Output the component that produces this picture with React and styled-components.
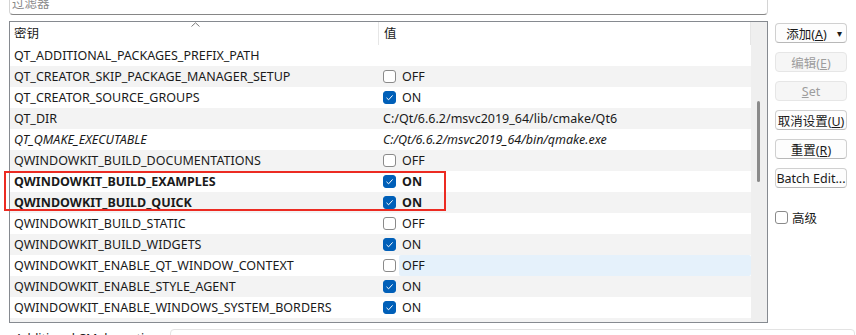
import React from 'react'
import styled, {createGlobalStyle} from 'styled-components'

const rows = [
  {key: 'QT_ADDITIONAL_PACKAGES_PREFIX_PATH', value: ''},
  {key: 'QT_CREATOR_SKIP_PACKAGE_MANAGER_SETUP', check: false},
  {key: 'QT_CREATOR_SOURCE_GROUPS', check: true},
  {key: 'QT_DIR', value: 'C:/Qt/6.6.2/msvc2019_64/lib/cmake/Qt6'},
  {key: 'QT_QMAKE_EXECUTABLE', value: 'C:/Qt/6.6.2/msvc2019_64/bin/qmake.exe', italic: true},
  {key: 'QWINDOWKIT_BUILD_DOCUMENTATIONS', check: false},
  {key: 'QWINDOWKIT_BUILD_EXAMPLES', check: true, bold: true},
  {key: 'QWINDOWKIT_BUILD_QUICK', check: true, bold: true},
  {key: 'QWINDOWKIT_BUILD_STATIC', check: false},
  {key: 'QWINDOWKIT_BUILD_WIDGETS', check: true},
  {key: 'QWINDOWKIT_ENABLE_QT_WINDOW_CONTEXT', check: false, hover: true},
  {key: 'QWINDOWKIT_ENABLE_STYLE_AGENT', check: true},
  {key: 'QWINDOWKIT_ENABLE_WINDOWS_SYSTEM_BORDERS', check: true},
  {key: 'QWINDOWKIT_INSTALL', value: ''},
]

function Check({on}) {
  return (
    <CheckBox $on={on}>
      {on && (
        <svg width="9" height="9" viewBox="0 0 9 9">
          <path d="M1.5 4.8 L3.6 6.8 L7.6 2.4" fill="none" stroke="#fff" strokeWidth="1" />
        </svg>
      )}
    </CheckBox>
  )
}

function App() {
  return (
    <Page>
      <GlobalStyle />
      <Filter placeholder="过滤器" />
      <Main>
        <TreeFrame>
          <TreeBody>
            <Header>
              <HeadCell $first>
                密钥
                <SortArrow width="9" height="5" viewBox="0 0 9 5">
                  <path d="M0.5 4.5 L4.5 0.8 L8.5 4.5" fill="none" stroke="#7a7a7a" strokeWidth="1" />
                </SortArrow>
              </HeadCell>
              <HeadCell>值</HeadCell>
            </Header>
            <Rows>
              {rows.map((r, i) => (
                <Row key={r.key} $alt={i % 2 === 1} $bold={r.bold} $italic={r.italic}>
                  <KeyCell>{r.key}</KeyCell>
                  <ValueCell>
                    {r.check !== undefined && <Check on={r.check} />}
                    <ValueText $boxed={r.check !== undefined} $hover={r.hover}>
                      {r.check !== undefined ? (r.check ? 'ON' : 'OFF') : r.value}
                    </ValueText>
                  </ValueCell>
                </Row>
              ))}
            </Rows>
          </TreeBody>
          <ScrollTrack>
            <Thumb />
          </ScrollTrack>
          <Marker />
        </TreeFrame>
        <Side>
          <Button>
            <span>添加(<u>A</u>)</span>
            <DropArrow>▾</DropArrow>
          </Button>
          <Button disabled><span>编辑(<u>E</u>)</span></Button>
          <Button disabled><span><u>S</u>et</span></Button>
          <Button><span>取消设置(<u>U</u>)</span></Button>
          <Button><span>重置(<u>R</u>)</span></Button>
          <Button><span>Batch Edit...</span></Button>
          <Advanced>
            <CheckBox />
            高级
          </Advanced>
        </Side>
      </Main>
      <Options>
        <OptionsLabel>Additional CMake options:</OptionsLabel>
        <OptionsInput />
      </Options>
    </Page>
  )
}

const GlobalStyle = createGlobalStyle`
body {
  margin: 0;
  background: #ffffff;
  overflow: hidden;
  font-family: "Noto Sans", "Noto Sans CJK SC", sans-serif;
  font-size: 12.5px;
  color: #1a1a1a;
}
`

const Page = styled.div`
width: 856px;
height: 344px;
margin-top: -9px;
padding-left: 9px;
box-sizing: border-box;
overflow: hidden;
`

const Filter = styled.input`
display: block;
width: 759px;
height: 24px;
box-sizing: border-box;
border: 1px solid #d4d4d4;
border-bottom: 1px solid #868686;
border-radius: 4px;
padding: 0 0 0 2px;
font-family: "Noto Sans", "Noto Sans CJK SC", sans-serif;
font-size: 12.5px;
outline: none;
&::placeholder {
  color: #8a8a8a;
}
`

const Main = styled.div`
display: flex;
margin-top: 6px;
`

const TreeFrame = styled.div`
position: relative;
display: flex;
width: 759px;
height: 302px;
box-sizing: border-box;
border: 1px solid #868a90;
`

const TreeBody = styled.div`
flex: 1;
display: flex;
flex-direction: column;
overflow: hidden;
`

const Header = styled.div`
display: grid;
grid-template-columns: 369px 1fr;
height: 23px;
flex: none;
border-right: 1px solid #e6e6e6;
`

const HeadCell = styled.div`
position: relative;
padding-left: ${p => (p.$first ? 4 : 5)}px;
line-height: 23px;
border-right: ${p => (p.$first ? '1px solid #e6e6e6' : 'none')};
`

const SortArrow = styled.svg`
position: absolute;
top: 0;
left: 181px;
`

const Rows = styled.div`
flex: 1;
overflow: hidden;
`

const Row = styled.div`
display: grid;
grid-template-columns: 369px 1fr;
height: 21px;
line-height: 21px;
background: ${p => (p.$alt ? '#f3f3f3' : '#ffffff')};
font-weight: ${p => (p.$bold ? 700 : 400)};
font-style: ${p => (p.$italic ? 'italic' : 'normal')};
white-space: nowrap;
`

const KeyCell = styled.div`
padding-left: 4px;
overflow: hidden;
`

const ValueCell = styled.div`
display: flex;
align-items: center;
padding-left: 4px;
`

const CheckBox = styled.span`
display: inline-flex;
align-items: center;
justify-content: center;
flex: none;
width: 13px;
height: 13px;
box-sizing: border-box;
border-radius: 3px;
border: 1px solid ${p => (p.$on ? '#005fb8' : '#8a8a8a')};
background: ${p => (p.$on ? '#005fb8' : '#ffffff')};
`

const ValueText = styled.div`
flex: 1;
align-self: stretch;
margin-left: ${p => (p.$boxed ? 3 : 0)}px;
padding-left: ${p => (p.$boxed ? 3 : 0)}px;
background: ${p => (p.$hover ? '#e5f1fb' : 'transparent')};
border-radius: 2px;
`

const ScrollTrack = styled.div`
position: relative;
width: 16px;
flex: none;
background: #efefef;
`

const Thumb = styled.div`
position: absolute;
left: 6px;
top: 79px;
width: 3px;
height: 81px;
border-radius: 2px;
background: #8a8a8a;
`

const Marker = styled.div`
position: absolute;
left: -6px;
top: 149px;
width: 442px;
height: 40px;
box-sizing: border-box;
border: 2px solid #ec2b22;
pointer-events: none;
`

const Side = styled.div`
display: flex;
flex-direction: column;
gap: 9px;
margin-left: 7px;
padding-top: 2px;
width: 72px;
`

const Button = styled.button`
display: flex;
align-items: center;
justify-content: center;
gap: 10px;
height: 20px;
padding: 0;
box-sizing: border-box;
border: 1px solid ${p => (p.disabled ? '#e6e6e6' : '#d0d0d0')};
border-bottom-color: ${p => (p.disabled ? '#e6e6e6' : '#b8b8b8')};
border-radius: 4px;
background: ${p => (p.disabled ? '#f6f6f6' : '#fdfdfd')};
color: ${p => (p.disabled ? '#9d9d9d' : '#1a1a1a')};
font-family: "Noto Sans", "Noto Sans CJK SC", sans-serif;
font-size: 12.5px;
white-space: nowrap;
u {
  text-underline-offset: 1px;
}
`

const DropArrow = styled.span`
font-size: 10px;
margin-right: -6px;
`

const Advanced = styled.label`
display: flex;
align-items: center;
gap: 4px;
margin-top: 11px;
`

const Options = styled.div`
display: flex;
margin-top: 6px;
`

const OptionsLabel = styled.div`
width: 155px;
padding: 3px 0 0 6px;
line-height: 14px;
white-space: nowrap;
`

const OptionsInput = styled.div`
width: 683px;
height: 24px;
border: 1px solid #e3e3e3;
border-radius: 4px;
`

export default App
